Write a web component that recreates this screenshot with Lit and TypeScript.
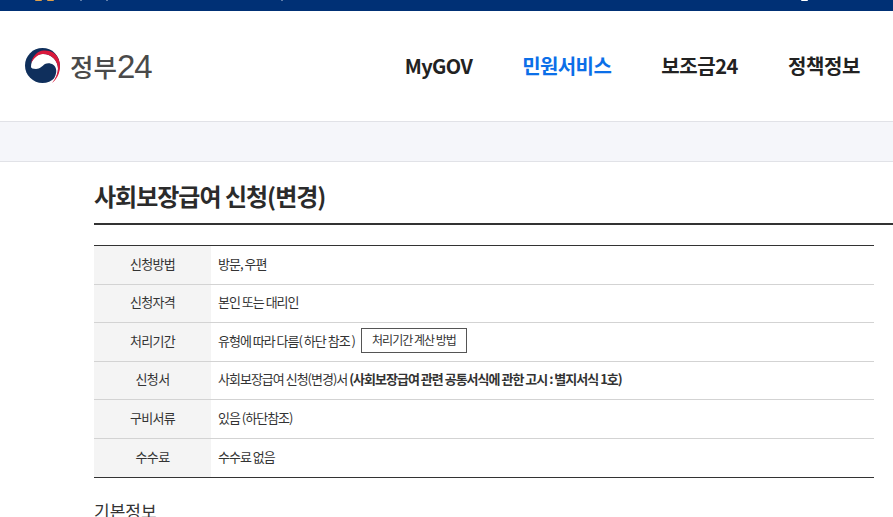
import { LitElement, html, css } from "lit";
import { customElement } from "lit/decorators.js";

const TOP_BITS: [number, number, string][] = [
  [35, 7, "#e0a04a"],
  [47, 7, "#e0a04a"],
  [80, 2, "#7f97bb"],
  [106, 2, "#7f97bb"],
  [281, 2, "#7f97bb"],
  [801, 7, "#ffffff"],
];

@customElement("app-root")
export class AppRoot extends LitElement {
  static styles = css`
    :host { display: block; width: 893px; height: 517px; overflow: hidden; background: #fff; font-family: "Noto Sans CJK KR", "Noto Sans", sans-serif; color: #333; }
    .top { height: 11px; background: #003075; overflow: hidden; position: relative; }
    .bit { position: absolute; top: 0; height: 1px; border-radius: 0 0 2px 2px; }
    .header { height: 110px; display: flex; align-items: center; justify-content: space-between; padding: 0 33px 0 25px; box-sizing: border-box; }
    .logo { display: flex; align-items: center; gap: 9px; }
    .logo-text { color: #4a4a4a; line-height: 1; display: flex; align-items: center; }
    .logo-ko { font-size: 25.5px; font-weight: 500; letter-spacing: 0; }
    .logo-num { font-family: "Liberation Sans", sans-serif; font-size: 33px; letter-spacing: -1px; }
    nav { display: flex; gap: 50px; font-size: 20px; font-weight: 700; color: #222; letter-spacing: -0.4px; }
    nav span { position: relative; top: -1px; }
    nav .tight { letter-spacing: -0.6px; }
    nav .on { color: #0b6fe8; }
    .band { height: 41px; box-sizing: border-box; background: #f5f6fa; border-top: 1px solid #e1e2e7; border-bottom: 1px solid #e1e2e7; }
    main { padding-left: 94px; }
    h1 { margin: 0; font-size: 24px; font-weight: 700; color: #2b2b2b; letter-spacing: -1px; line-height: 32px; padding-top: 18px; height: 43px; border-bottom: 2px solid #333; box-sizing: content-box; }
    .tbl { width: 780px; margin-top: 20px; border-top: 1px solid #333; border-bottom: 1px solid #333; }
    .row { display: flex; height: 39px; border-top: 1px solid #d3d3d3; box-sizing: border-box; font-size: 13px; line-height: 1; }
    .row:first-child { border-top: 0; }
    .row:nth-child(-n+2), .row:nth-child(4) { height: 38px; }
    .th { width: 117px; background: #f4f4f4; display: flex; align-items: center; justify-content: center; color: #333; letter-spacing: -0.7px; padding-bottom: 4px; box-sizing: border-box; }
    .td { display: flex; align-items: center; padding: 0 0 4px 7px; color: #333; white-space: pre; letter-spacing: -1px; box-sizing: border-box; }
    .btn { margin-left: 6px; border: 1px solid #555; height: 25px; width: 106px; box-sizing: border-box; display: flex; align-items: center; justify-content: center; font-size: 12px; }
    h2 { margin: 21px 0 0; font-size: 17px; font-weight: 400; color: #333; line-height: 24px; }
  `;

  render() {
    const rows: [string, unknown][] = [
      ["신청방법", "방문, 우편"],
      ["신청자격", "본인 또는 대리인"],
      ["처리기간", html`유형에 따라 다름( 하단 참조 )<span class="btn">처리기간 계산 방법</span>`],
      ["신청서", html`사회보장급여 신청(변경)서 <b>(사회보장급여 관련 공통서식에 관한 고시 : 별지서식 1호)</b>`],
      ["구비서류", "있음 (하단참조)"],
      ["수수료", "수수료 없음"],
    ];
    return html`
      <div class="top">
        ${TOP_BITS.map(([x, w, c]) => html`<i class="bit" style="left:${x}px;width:${w}px;background:${c}"></i>`)}
      </div>
      <header class="header">
        <div class="logo">
          <svg width="36" height="36" viewBox="0 0 36 36" aria-hidden="true">
            <circle cx="17.5" cy="17.5" r="17.5" fill="#0f2f5c"/>
            <path d="M6 19C6 11 12 5.500 18 6C27 6 33 13 33 21C33 26 31 30 27 34.500C30 29 32 25 31 21C30 16 24 14 20 16C17 18 15 21 11 21C8 21 6 20 6 19Z" fill="#fff"/>
            <path d="M27 1.500C31 4 35 10 35 17.500C35 25 32 31 26 35.500L36 36V0Z" fill="#fff"/>
            <path d="M6 15C8 7 13 3 18.500 2.500C23 2.200 27 3.500 29.500 5.500C33 8.500 35 13 35 18C35 25 32 31 27 35C31 30 33 25 33 20C32.500 12 26 6 18 6C13 6 9 10 6 15Z" fill="#d9193c"/>
          </svg>
          <span class="logo-text"><span class="logo-ko">정부</span><span class="logo-num">24</span></span>
        </div>
        <nav><span class="tight">MyGOV</span><span class="on tight">민원서비스</span><span>보조금24</span><span>정책정보</span></nav>
      </header>
      <div class="band"></div>
      <main>
        <h1>사회보장급여 신청(변경)</h1>
        <div class="tbl">
          ${rows.map(([k, v]) => html`<div class="row"><div class="th">${k}</div><div class="td">${v}</div></div>`)}
        </div>
        <h2>기본정보</h2>
      </main>
    `;
  }
}
